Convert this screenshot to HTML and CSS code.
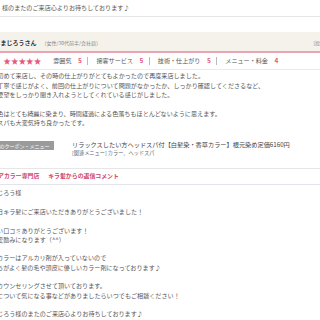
FILE: index.html
```html
<!DOCTYPE html>
<html lang="ja">
<head>
  <meta charset="UTF-8" />
  <meta name="viewport" content="width=device-width, initial-scale=1.0"/>
  <title>口コミ - キラ髪</title>
  <link rel="stylesheet" href="styles.css">
</head>
<body>

  <div class="page">

    <!-- ひとつ前の口コミの返信（末尾だけ見えている） -->
    <div class="prev-reply">
      <p>様のまたのご来店心よりお待ちしております♪</p>
    </div>

    <div class="review">
      <div class="review-head">
        <span class="reviewer-name">まじろうさん</span>
        <span class="reviewer-info">（女性/30代前半/会社員）</span>
        <span class="review-date">[投稿日] 2024/03/18</span>
      </div>

      <div class="ratings">
        <span class="stars">★★★★★</span>
        <span class="rating-item">雰囲気<b>5</b></span>
        <span class="rating-item">接客サービス<b>5</b></span>
        <span class="rating-item">技術・仕上がり<b>5</b></span>
        <span class="rating-item">メニュー・料金<b>4</b></span>
      </div>

      <p class="review-body">
        初めて来店し、その時の仕上がりがとてもよかったので再度来店しました。<br>
        丁寧で感じがよく、前回の仕上がりについて問題がなかったか、しっかり確認してくださるなど、<br>
        要望をしっかり聞き入れようとしてくれている感じがしました。<br>
        <br>
        色はとても綺麗に染まり、時間経過による色落ちもほとんどないように思えます。<br>
        スパも大変気持ち良かったです。
      </p>

      <div class="coupon">
        <span class="coupon-label">ご利用のクーポン・メニュー</span>
        <div class="coupon-menu">
          <p class="menu-title">リラックスしたい方ヘッドスパ付【白髪染・香草カラー】根元染め定価6160円</p>
          <p class="menu-related">[関連メニュー] カラー、ヘッドスパ</p>
        </div>
      </div>

      <div class="reply">
        <h3 class="reply-title"><span class="shop">ヘアカラー専門店</span>　キラ髪からの返信コメント</h3>
        <p class="reply-body">
          まじろう様<br>
          <br>
          先日キラ髪にご来店いただきありがとうございました！<br>
          <br>
          良い口コミありがとうございます！<br>
          大変励みになります（^^）<br>
          <br>
          　カラーはアルカリ剤が入っていないので<br>
          もちがよく髪の毛や頭皮に優しいカラー剤になっております♪<br>
          <br>
          　カウンセリングさせて頂いております。<br>
          髪について気になる事などがありましたらいつでもご相談ください！<br>
          <br>
          まじろう様のまたのご来店心よりお待ちしております♪
        </p>
      </div>
    </div>

  </div>

</body>
</html>
```

FILE: styles.css
```css
/* 口コミページ */
* {
  box-sizing: border-box;
  margin: 0;
  padding: 0;
}

body {
  font-family: "Noto Sans CJK JP", "Noto Sans", sans-serif;
  color: #555;
  background-color: #fff;
  width: 320px;
  height: 320px;
  overflow: hidden;
}

.page {
  width: 380px;
  margin-left: -9px;
  font-size: 6.1px;
  line-height: 9.3px;
}

.prev-reply {
  padding: 3.4px 0 3.3px 11px;
  border-bottom: 1px solid #e6e6e6;
}

.review {
  margin-top: 15px;
}

.review-head {
  display: flex;
  align-items: center;
  height: 21px;
  padding: 2px 12px 0 9.5px;
  background-color: #f5f2ec;
  border-bottom: 2px solid #eaa5b5;
}

.reviewer-name {
  font-size: 6px;
  font-weight: bold;
  color: #333;
}

.reviewer-info {
  margin-left: 5px;
  font-size: 5px;
  color: #888;
}

.review-date {
  margin-left: auto;
  font-size: 5px;
  color: #888;
}

.ratings {
  display: flex;
  align-items: center;
  height: 17px;
  padding-left: 12.3px;
  border-bottom: 1px solid #ececec;
}

.stars {
  margin-right: 12px;
  font-size: 7.6px;
  line-height: 1;
  color: #e5577d;
}

.rating-item {
  display: flex;
  align-items: center;
}

.rating-item b {
  margin-left: 6.5px;
  font-size: 6.5px;
  color: #e5577d;
}

.rating-item + .rating-item::before {
  content: "";
  width: 1px;
  height: 8px;
  margin: 0 8px 0 5.5px;
  background-color: #bbb;
}

.review-body {
  margin-top: 1.4px;
  padding-left: 6.3px;
}

.coupon {
  display: flex;
  align-items: flex-start;
  margin-top: 13.8px;
}

.coupon-label {
  margin-left: -9.5px;
  padding: 0 4px 0 3px;
  font-size: 5px;
  line-height: 9px;
  color: #fff;
  background-color: #9b9b9b;
}

.coupon-menu {
  margin-left: 18.5px;
}

.menu-title {
  font-size: 6.2px;
  line-height: 8px;
  color: #444;
}

.menu-related {
  font-size: 5.2px;
  line-height: 7px;
  color: #666;
}

.reply {
  margin-top: 12.5px;
  border-top: 1px solid #e6e6e6;
}

.reply-title {
  padding-left: 1.2px;
  font-size: 5.9px;
  font-weight: bold;
  line-height: 14.5px;
  color: #cf456b;
  border-bottom: 1px solid #e3e3ea;
}

.reply-title .shop {
  margin-right: 3px;
}

.reply-body {
  margin-top: 3.4px;
}
```
